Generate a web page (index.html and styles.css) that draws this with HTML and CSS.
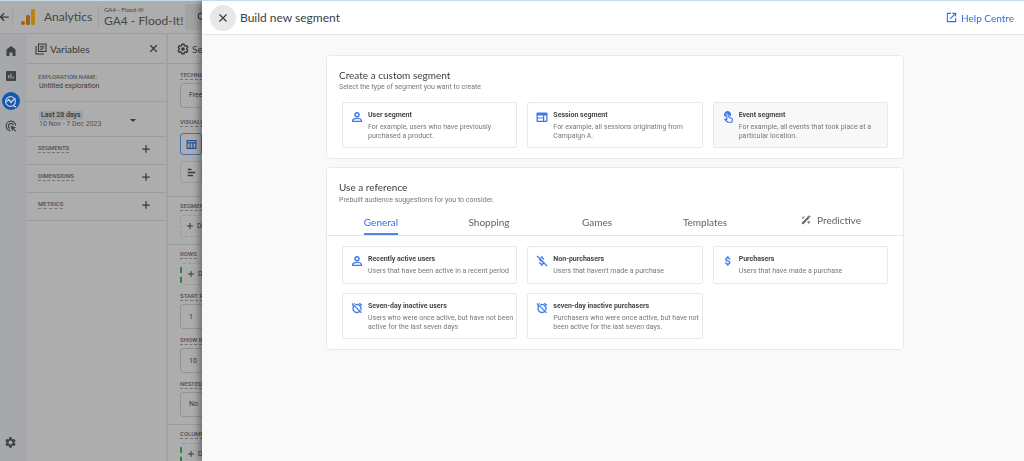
FILE: index.html
```html
<!DOCTYPE html>
<html lang="en">
<head>
<meta charset="utf-8">
<meta name="viewport" content="width=device-width, initial-scale=1">
<title>Build new segment - Analytics</title>
<link rel="stylesheet" href="styles.css">
</head>
<body>
<svg class="sprite" aria-hidden="true">
  <symbol id="close" viewBox="0 0 24 24"><path d="M5 5l14 14M19 5L5 19" fill="none" stroke="currentColor" stroke-width="2.6"/></symbol>
  <symbol id="plus" viewBox="0 0 24 24"><path d="M12 3v18M3 12h18" fill="none" stroke="currentColor" stroke-width="3"/></symbol>
  <symbol id="gear" viewBox="0 0 24 24"><path fill="currentColor" fill-rule="evenodd" d="M19.14 12.94c.04-.3.06-.61.06-.94s-.02-.64-.07-.94l2.03-1.58c.18-.14.23-.41.12-.61l-1.92-3.32c-.12-.22-.37-.29-.59-.22l-2.39.96c-.5-.38-1.03-.7-1.62-.94l-.36-2.54c-.04-.24-.24-.41-.48-.41h-3.84c-.24 0-.43.17-.47.41l-.36 2.54c-.59.24-1.13.57-1.62.94l-2.39-.96c-.22-.08-.47 0-.59.22L2.74 8.87c-.12.21-.08.47.12.61l2.03 1.58c-.05.3-.09.63-.09.94s.02.64.07.94l-2.03 1.58c-.18.14-.23.41-.12.61l1.92 3.32c.12.22.37.29.59.22l2.39-.96c.5.38 1.03.7 1.62.94l.36 2.54c.05.24.24.41.48.41h3.84c.24 0 .44-.17.47-.41l.36-2.54c.59-.24 1.13-.56 1.62-.94l2.39.96c.22.08.47 0 .59-.22l1.92-3.32c.12-.22.07-.47-.12-.61l-2.01-1.58zM12 15.6a3.6 3.6 0 1 1 0-7.2 3.6 3.6 0 0 1 0 7.2z"/></symbol>
  <symbol id="gear-outline" viewBox="0 0 24 24"><path fill="none" stroke="currentColor" stroke-width="2.6" stroke-linejoin="round" d="M9.8 2.5h4.4l.6 2.9 1.8 1 2.8-1 2.2 3.8-2.2 1.9v1.8l2.2 1.9-2.2 3.8-2.8-1-1.8 1-.6 2.9H9.8l-.6-2.9-1.8-1-2.8 1-2.2-3.8 2.2-1.9v-1.8L2.4 9.2l2.200-3.800 2.800 1 1.800-1z"/><circle cx="12" cy="12" r="3.6" fill="currentColor"/></symbol>
  <symbol id="user" viewBox="0 0 24 24"><path fill="none" stroke="currentColor" stroke-width="2.8" d="M3.300 20.700v-2.200c0-2.400 5.500-3.800 8.700-3.800s8.700 1.400 8.700 3.800v2.200z"/><circle cx="12" cy="7.500" r="4" fill="none" stroke="currentColor" stroke-width="2.8"/></symbol>
  <symbol id="alarm-off" viewBox="0 0 24 24"><path fill="currentColor" stroke="currentColor" stroke-width=".7" d="M12 6c3.870 0 7 3.130 7 7 0 .840-.160 1.650-.430 2.400l1.520 1.520c.580-1.190.910-2.510.910-3.920a9 9 0 0 0-9-9c-1.410 0-2.730.330-3.920.910L9.600 6.430C10.350 6.160 11.160 6 12 6zm10-.280l-4.600-3.860-1.290 1.530 4.600 3.860L22 5.720zM2.920 2.290L1.650 3.570 2.980 4.900l-1.110.930 1.420 1.420 1.110-.940.800.800A8.960 8.960 0 0 0 3 13c0 4.970 4.020 9 9 9 2.250 0 4.310-.830 5.890-2.200l2.200 2.200 1.270-1.270L3.890 3.270l-.970-.980zm13.550 16.100C15.260 19.390 13.700 20 12 20c-3.870 0-7-3.130-7-7 0-1.700.610-3.260 1.610-4.470l9.860 9.860zM8.020 3.280L6.600 1.860l-.860.710 1.420 1.420.860-.710z"/></symbol>
  <symbol id="dollar" viewBox="0 0 24 24"><path fill="currentColor" stroke="currentColor" stroke-width=".6" d="M11.800 10.900c-2.270-.590-3-1.200-3-2.150 0-1.090 1.010-1.850 2.700-1.850 1.780 0 2.440.850 2.500 2.100h2.210c-.070-1.720-1.120-3.300-3.210-3.810V3h-3v2.160c-1.940.420-3.500 1.680-3.500 3.610 0 2.310 1.910 3.460 4.700 4.130 2.500.600 3 1.480 3 2.410 0 .690-.490 1.790-2.700 1.790-2.060 0-2.870-.920-2.980-2.100h-2.200c.120 2.190 1.760 3.420 3.680 3.830V21h3v-2.150c1.950-.370 3.500-1.500 3.500-3.550 0-2.840-2.430-3.810-4.700-4.400z"/></symbol>
</svg>

<div class="app">
  <header class="topbar">
    <button class="icon-btn back" aria-label="Back"><svg viewBox="0 0 24 24" width="10" height="10"><path d="M21 12H1M10 3l-9 9 9 9" fill="none" stroke="currentColor" stroke-width="3"/></svg></button>
    <svg class="logo" viewBox="0 0 14 16" width="14" height="16" aria-hidden="true"><rect x="10" y="0" width="4" height="16" rx="1.5" fill="#b8860f"/><rect x="5" y="6" width="4" height="10" rx="1.5" fill="#a8600c"/><circle cx="2" cy="14" r="2" fill="#a8600c"/></svg>
    <span class="brand">Analytics</span>
    <div class="property"><small>GA4 - Flood-It!</small><span>GA4 - Flood-It!</span></div>
    <div class="searchbox" aria-hidden="true"><svg viewBox="0 0 24 24" width="10" height="10"><circle cx="10" cy="10" r="7" fill="none" stroke="currentColor" stroke-width="2.5"/><path d="M15 15l7 7" stroke="currentColor" stroke-width="2.5"/></svg></div>
  </header>
  <div class="workspace">
    <nav class="rail" aria-label="Main">
      <button class="icon-btn rail-item" aria-label="Home"><svg viewBox="0 0 24 24" width="12" height="12"><path d="M12 2L3 9v13h6v-7h6v7h6V9z" fill="currentColor"/></svg></button>
      <button class="icon-btn rail-item" aria-label="Reports"><svg viewBox="0 0 24 24" width="12" height="12"><rect x="2" y="2" width="20" height="20" rx="2" fill="currentColor"/><path d="M7.500 10v7M12 7v10M16.500 13v4" stroke="#a9abae" stroke-width="2.2"/></svg></button>
      <button class="icon-btn rail-item active" aria-label="Explore"><svg viewBox="0 0 24 24" width="13" height="13"><circle cx="12" cy="12" r="9" fill="none" stroke="currentColor" stroke-width="2.2"/><path d="M3 13l6-4 4 4 8-7M17 20l5 2" fill="none" stroke="currentColor" stroke-width="2.4"/><circle cx="9" cy="9" r="2" fill="currentColor"/><circle cx="13" cy="13" r="2" fill="currentColor"/></svg></button>
      <button class="icon-btn rail-item" aria-label="Advertising"><svg viewBox="0 0 24 24" width="12" height="12"><path d="M11 21.500A9.600 9.600 0 1 1 21.500 11M10 17a5.300 5.300 0 1 1 7-7" fill="none" stroke="currentColor" stroke-width="2.4"/><path d="M11 11l11 4-4.500 2 5 5-1.500 1.500-5-5-1.500 4z" fill="currentColor"/></svg></button>
      <button class="icon-btn rail-item admin" aria-label="Admin"><svg width="13" height="13"><use href="#gear"/></svg></button>
    </nav>

    <section class="variables">
      <div class="panel-head">
        <svg viewBox="0 0 24 24" width="12" height="12"><path d="M7 2h15v15H7zM2 6v16h16M10.500 6.500h8M10.500 10h8M10.500 13.500h5" fill="none" stroke="currentColor" stroke-width="2.2"/></svg>
        <h2>Variables</h2>
        <button class="icon-btn" aria-label="Close variables"><svg width="11" height="11"><use href="#close"/></svg></button>
      </div>
      <div class="exploration">
        <label for="name">EXPLORATION NAME:</label>
        <input id="name" type="text" value="Untitled exploration">
      </div>
      <button class="dates">
        <span><b>Last 28 days</b><span class="range">10 Nov - 7 Dec 2023</span></span>
        <svg viewBox="0 0 6 3" width="6" height="3"><path d="M0 0h6L3 3z" fill="currentColor"/></svg>
      </button>
      <div class="group"><span class="label">SEGMENTS</span><button class="icon-btn" aria-label="Add segment"><svg width="10" height="10"><use href="#plus"/></svg></button></div>
      <div class="group"><span class="label">DIMENSIONS</span><button class="icon-btn" aria-label="Add dimension"><svg width="10" height="10"><use href="#plus"/></svg></button></div>
      <div class="group"><span class="label">METRICS</span><button class="icon-btn" aria-label="Add metric"><svg width="10" height="10"><use href="#plus"/></svg></button></div>
    </section>

    <section class="settings">
      <div class="panel-head"><svg width="12" height="12"><use href="#gear-outline"/></svg><h2>Settings</h2></div>
      <div class="setting-block first">
        <span class="label">TECHNIQUE</span>
        <button class="field">Free form</button>
        <span class="label visual">VISUALISATION</span>
        <button class="viz on" aria-label="Table"><svg viewBox="0 0 24 24" width="11" height="11"><path d="M2.500 3.500h19v17h-19zM2.500 8.500h19M9 9v12M15 9v12" fill="none" stroke="currentColor" stroke-width="2.6"/></svg></button>
        <button class="viz" aria-label="Bar chart"><svg viewBox="0 0 24 24" width="9" height="9"><path d="M2 4h10M2 12h20M2 20h14" stroke="currentColor" stroke-width="4.500"/></svg></button>
      </div>
      <div class="setting-block">
        <span class="label">SEGMENT COMPARISONS</span>
        <button class="drop"><svg width="8" height="8"><use href="#plus"/></svg>Drop or select segment</button>
      </div>
      <div class="setting-block rows">
        <span class="label">ROWS</span>
        <button class="drop green"><svg width="8" height="8"><use href="#plus"/></svg>Drop or select dimension</button>
        <label class="label" for="start">START ROW</label>
        <input class="field" id="start" type="text" value="1">
        <label class="label" for="show">SHOW ROWS</label>
        <input class="field" id="show" type="text" value="10">
        <label class="label" for="nested">NESTED ROWS</label>
        <select class="field" id="nested"><option>No</option><option>Yes</option></select>
      </div>
      <div class="setting-block">
        <span class="label">COLUMNS</span>
        <button class="drop green"><svg width="8" height="8"><use href="#plus"/></svg>Drop or select dimension</button>
      </div>
    </section>
  </div>
</div>

<main class="drawer" role="dialog" aria-labelledby="title">
  <header class="drawer-head">
    <button class="icon-btn dismiss" aria-label="Close"><svg width="12" height="12"><use href="#close"/></svg></button>
    <h1 id="title">Build new segment</h1>
    <a class="help" href="#help"><svg viewBox="0 0 24 24" width="11" height="11"><path d="M11 3H3v18h18v-8M14 3h7v7M21 3L9 15" fill="none" stroke="currentColor" stroke-width="2.4"/></svg>Help Centre</a>
  </header>
  <div class="content">
    <section class="panel">
      <h2>Create a custom segment</h2>
      <p class="sub">Select the type of segment you want to create</p>
      <div class="cards">
        <button class="card"><svg width="12" height="12"><use href="#user"/></svg><span><b>User segment</b><span class="desc">For example, users who have previously purchased a product.</span></span></button>
        <button class="card"><svg viewBox="0 0 24 24" width="12" height="12"><rect x="1" y="3" width="22" height="19" rx="2" fill="currentColor"/><path d="M3.500 9h10.500v4H3.500zM3.500 15h10.500v4.500H3.500zM16.500 9h4v10.500h-4z" fill="#fff"/></svg><span><b>Session segment</b><span class="desc">For example, all sessions originating from Campaign A.</span></span></button>
        <button class="card selected"><svg viewBox="0 0 24 24" width="12" height="12"><path d="M7.500 11a5.200 5.200 0 1 1 8-1" fill="none" stroke="currentColor" stroke-width="3.4"/><path d="M9.800 17V6.500c0-2.400 3.700-2.400 3.700 0v6l6 2.500c1 .5 1.400 1.300 1.200 2.300l-.9 5.200h-8.300L5.800 17l1-1z" fill="#f8f9fa" stroke="currentColor" stroke-width="2.2" stroke-linejoin="round"/></svg><span><b>Event segment</b><span class="desc">For example, all events that took place at a particular location.</span></span></button>
      </div>
    </section>

    <section class="panel reference">
      <h2>Use a reference</h2>
      <p class="sub">Prebuilt audience suggestions for you to consider.</p>
      <div class="tabs" role="tablist">
        <button role="tab" aria-selected="true"><span>General</span></button>
        <button role="tab" aria-selected="false"><span>Shopping</span></button>
        <button role="tab" aria-selected="false"><span>Games</span></button>
        <button role="tab" aria-selected="false"><span>Templates</span></button>
        <button role="tab" aria-selected="false" class="predictive"><svg viewBox="0 0 24 24" width="10" height="10"><path d="M3 21L18 6" stroke="currentColor" stroke-width="5"/><path d="M12 11l3 3" stroke="#fff" stroke-width="1.500"/><path d="M3 4l5 5M8 3L3 9M19 1v6M16 4h7M19 14v7M15 17h7" stroke="currentColor" stroke-width="2"/></svg><span>Predictive</span></button>
      </div>
      <div class="cards">
        <button class="card"><svg width="12" height="12"><use href="#user"/></svg><span><b>Recently active users</b><span class="desc">Users that have been active in a recent period</span></span></button>
        <button class="card"><svg viewBox="0 0 24 24" width="12" height="12"><use href="#dollar"/><path d="M4.500 1.500l19 19" stroke="#fff" stroke-width="2"/><path d="M2 2l20 20" stroke="currentColor" stroke-width="2.600"/></svg><span><b>Non-purchasers</b><span class="desc">Users that haven't made a purchase</span></span></button>
        <button class="card"><svg width="12" height="12"><use href="#dollar"/></svg><span><b>Purchasers</b><span class="desc">Users that have made a purchase</span></span></button>
        <button class="card"><svg width="12" height="12"><use href="#alarm-off"/></svg><span><b>Seven-day inactive users</b><span class="desc">Users who were once active, but have not been active for the last seven days</span></span></button>
        <button class="card"><svg width="12" height="12"><use href="#alarm-off"/></svg><span><b>seven-day inactive purchasers</b><span class="desc">Purchasers who were once active, but have not been active for the last seven days.</span></span></button>
      </div>
    </section>
  </div>
</main>
</body>
</html>
```
FILE: styles.css
```css
* { box-sizing: border-box; }
body {
  margin: 0;
  height: 100vh;
  overflow: hidden;
  background: #adadad;
  color: #3c4043;
  font: 7px/9px Roboto, "Liberation Sans", sans-serif;
}
h1, h2, p { margin: 0; font-weight: 400; }
button, input, select { font: inherit; color: inherit; background: none; border: 0; padding: 0; margin: 0; border-radius: 0; }
button { text-align: left; cursor: pointer; }
select { appearance: none; }
svg { flex: none; display: block; }
.sprite { position: absolute; width: 0; height: 0; }
.icon-btn { display: flex; align-items: center; justify-content: center; }

/* Dimmed application behind the drawer */
.app { height: 100%; display: flex; flex-direction: column; border-top: 1px solid #bfdfe9; color: #36383b; }
.topbar { flex: none; height: 33px; display: flex; align-items: center; border-bottom: 1px solid #9d9e9f; }
.back { width: 13px; height: 20px; border-right: 1px solid #a1a2a3; justify-content: flex-start; }
.logo { margin-left: 8px; }
.brand { font: 12px/18px Lato, Roboto, sans-serif; margin-left: 9px; width: 54px; color: #44474a; }
.property { display: flex; flex-direction: column; border-left: 1px solid #9d9e9f; padding-left: 5px; width: 87px; white-space: nowrap; font: 12px/14px Lato, Roboto, sans-serif; color: #44474a; }
.property small { font-size: 6px; line-height: 8px; }
.searchbox { width: 300px; height: 26px; background: #a1a2a3; border-radius: 3px; padding: 8px 12px; }
.workspace { flex: 1; min-height: 0; display: flex; }
.rail { width: 25px; background: #a6a8ab; display: flex; flex-direction: column; align-items: center; padding: 8px 4px 10px 0; gap: 7px; color: #3f4246; }
.rail-item { width: 18px; height: 18px; }
.rail-item.active { background: #1558b0; color: #c3d0e0; border-radius: 50%; }
.admin { margin-top: auto; }
.variables { width: 143px; border-left: 1px solid #a1a2a3; border-right: 2px solid #a1a2a3; }
.settings { width: 200px; overflow: hidden; }
.panel-head { height: 30px; display: flex; align-items: center; gap: 3px; padding: 0 7px 0 9px; border-bottom: 1px solid #9b9c9d; }
.panel-head h2 { flex: 1; font: 10px/12px Lato, Roboto, sans-serif; }
.exploration { height: 38px; padding: 8px 12px; border-bottom: 1px solid #9b9c9d; display: flex; flex-direction: column; }
.exploration label { font-size: 6px; font-weight: 500; line-height: 9px; color: #55585b; }
.exploration input { height: 10px; width: 100%; padding-left: 1px; }
.dates { width: 100%; height: 35px; padding: 2px 30px 0 13px; border-bottom: 1px solid #9b9c9d; display: flex; align-items: center; justify-content: space-between; }
.dates b { display: block; width: max-content; background: #a0a1a2; padding: 0 2px; font-weight: 500; }
.range { color: #505356; }
.group { height: 28px; display: flex; align-items: center; justify-content: space-between; padding: 0 15px 4px 12px; border-bottom: 1px solid #9b9c9d; }
.label { display: block; width: max-content; height: 9px; line-height: 8px; font-size: 6px; font-weight: 500; color: #4d5053; border-bottom: 1px dashed #727476; }
.setting-block { padding: 5px 0 7px 12px; border-bottom: 1px solid #9b9c9d; }
.setting-block.first { padding: 7px 0 13px 12px; }
.setting-block.rows { padding-bottom: 0; }
.field { display: flex; align-items: center; width: 180px; height: 25px; margin: 3px 0 7px; padding: 0 8px; border: 1px solid #939495; border-radius: 3px; }
.label.visual { margin-top: 10px; }
.viz { display: flex; align-items: center; justify-content: center; width: 22px; height: 22px; margin-top: 6px; border: 1px solid #9b9c9d; border-radius: 3px; }
.viz.on { color: #225396; border-color: #4272b3; }
.drop { display: flex; align-items: center; gap: 3px; width: 180px; height: 22px; margin-top: 4px; padding: 0 5px; border: 1px dashed #999a9b; border-radius: 3px; }
.drop.green { margin-bottom: 7px; border-left: 2px dashed #2f8544; }

/* Drawer */
.drawer {
  position: fixed;
  inset: 0 0 0 202px;
  background: #f9f9f9;
  border-top: 1px solid #bfdfe9;
  box-shadow: -2px 1px 8px rgba(0, 0, 0, .45);
  display: flex;
  flex-direction: column;
}
.drawer-head { flex: none; height: 34px; display: flex; align-items: center; gap: 4px; padding: 0 10px 0 8px; background: #fff; border-bottom: 1px solid #e4e5e6; }
.drawer-head h1 { flex: 1; font: 12px/16px Lato, Roboto, sans-serif; }
.dismiss { width: 26px; height: 26px; border-radius: 50%; background: #e8e8e8; }
.help { display: flex; align-items: center; gap: 4px; color: #2f6fde; text-decoration: none; font: 10px/12px Lato, Roboto, sans-serif; }
.content { margin: 20px 120px 0 124px; display: flex; flex-direction: column; gap: 8px; }
.panel { background: #fff; border: 1px solid #e8e9ea; border-radius: 4px; padding: 12px 0 10px; }
.panel h2 { padding: 0 12px; font: 10px/14px Lato, Roboto, sans-serif; }
.sub { padding: 0 12px; line-height: 9px; margin-top: 1px; color: #75787c; }
.reference .sub { margin-top: 2px; }
.cards { display: grid; grid-template-columns: repeat(3, 1fr); gap: 9px 10px; padding: 0 15px; margin-top: 10px; }
.card { display: flex; align-items: flex-start; gap: 5px; min-height: 38px; padding: 8px 0 6px 8px; border: 1px solid #e6e8ea; border-radius: 2px; background: #fff; color: #3b78e7; }
.card.selected { background: #f8f8f9; }
.card b { display: block; font-weight: 700; color: #44474b; }
.desc { display: block; margin-top: 3px; color: #75787c; }
.tabs { display: grid; grid-template-columns: repeat(4, 3fr) 4fr; border-bottom: 1px solid #e4e5e6; margin-top: 4px; }
.tabs button { display: flex; justify-content: center; height: 26px; font: 10px/26px Lato, Roboto, sans-serif; color: #5f6368; }
.tabs button[aria-selected="true"] { color: #2f6fde; }
.tabs button[aria-selected="true"] span { border-bottom: 2px solid #4a86ec; }
.tabs .predictive { align-items: center; gap: 6px; padding-bottom: 4px; }
```
